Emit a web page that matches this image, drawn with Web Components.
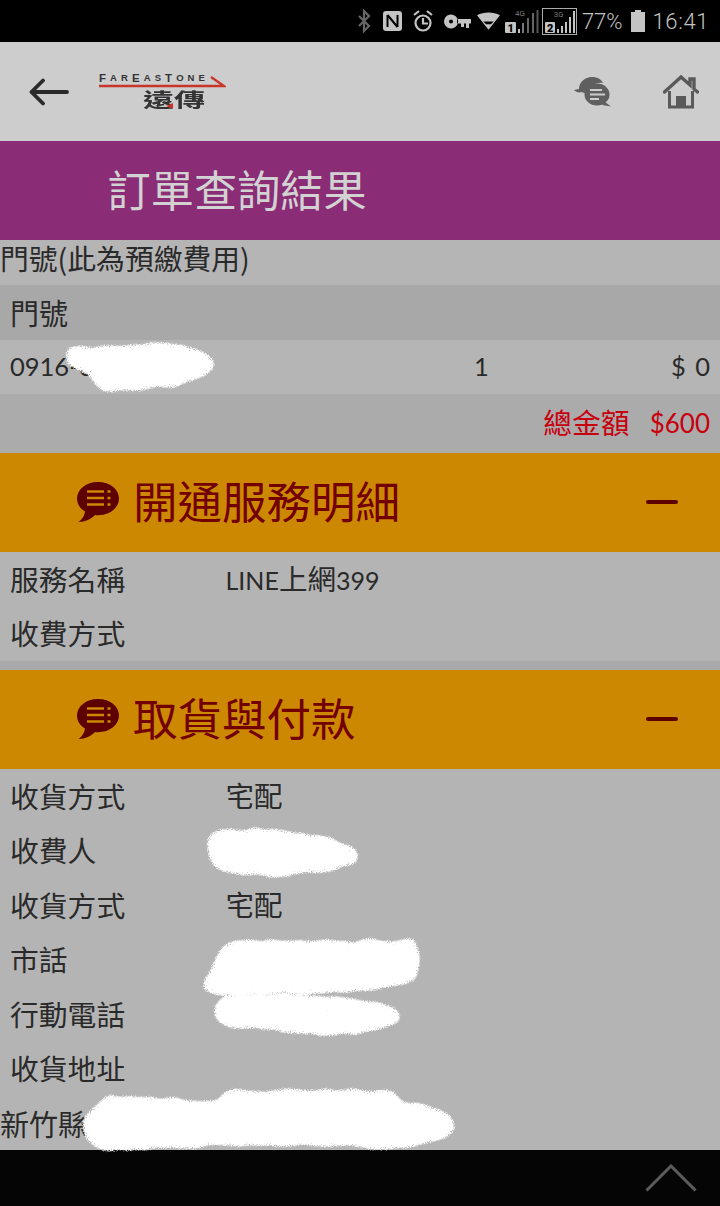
<!DOCTYPE html>
<html lang="zh-Hant"><head><meta charset="utf-8"><title>訂單查詢結果</title>
<style>
html,body{margin:0;padding:0;background:#b4b4b4}
body{width:720px;height:1206px;overflow:hidden;font-family:"Noto Sans CJK TC","Noto Sans",sans-serif}
</style></head><body>
<order-app>
  <status-bar slot="top"></status-bar>
  <app-header slot="top"></app-header>
  <page-title slot="top">訂單查詢結果</page-title>
  <plain-row h="45" pad="0" bg="#b5b5b5" size="28.8" lift="9">門號(此為預繳費用)</plain-row>
  <plain-row h="55" pad="10" bg="#a8a8a8" size="29" lift="0">門號</plain-row>
  <number-row></number-row>
  <total-row></total-row>
  <section-head>開通服務明細</section-head>
  <info-row label="服務名稱">LINE<span style="font-size:28.5px">上網</span>399</info-row>
  <info-row label="收費方式"></info-row>
  <section-gap></section-gap>
  <section-head>取貨與付款</section-head>
  <info-row label="收貨方式"><span style="font-size:28.5px">宅配</span></info-row>
  <info-row label="收費人"></info-row>
  <info-row label="收貨方式"><span style="font-size:28.5px">宅配</span></info-row>
  <info-row label="市話"></info-row>
  <info-row label="行動電話"></info-row>
  <info-row label="收貨地址"></info-row>
  <plain-row h="54" pad="0" bg="#b4b4b4" size="29" lift="0">新竹縣</plain-row>
  <redact-blob slot="over" d="M68 350 C90 346 105 350 117 347 C140 344 165 344 180 347 C196 350 212 354 213 364 C212 374 195 378 180 383 C150 390 120 390 99 388 C94 382 94 378 90 374 C82 370 72 368 68 362Z"></redact-blob>
  <redact-blob slot="over" d="M212 834 C240 827 290 831 320 838 C344 840 358 850 357 858 C352 868 320 870 290 873 C260 878 230 870 216 866 C208 856 206 844 212 834Z"></redact-blob>
  <redact-blob slot="over" d="M222 944 C270 940 340 945 410 940 C418 942 419 960 415 980 C380 990 320 992 280 993 C250 996 216 996 206 990 C204 976 218 966 222 944Z"></redact-blob>
  <redact-blob slot="over" d="M224 997 C260 993 340 995 372 1004 C392 1003 402 1012 399 1022 C380 1030 350 1032 330 1034 C300 1032 250 1029 224 1024 C212 1016 212 1006 224 997Z"></redact-blob>
  <redact-blob slot="over" d="M110 1098 C140 1096 180 1102 220 1102 C220 1092 240 1090 260 1091 C300 1091 360 1091 392 1093 C398 1100 398 1103 422 1105 C442 1108 455 1118 454 1128 C448 1140 420 1146 380 1147 C340 1144 300 1145 260 1143 C200 1146 130 1150 102 1148 C90 1142 82 1130 86 1118 C90 1110 98 1102 110 1098Z"></redact-blob>
  <bottom-nav slot="bottom"></bottom-nav>
</order-app>
<script>
const def=(name,html)=>customElements.define(name,class extends HTMLElement{
  connectedCallback(){if(this.shadowRoot)return;const r=this.attachShadow({mode:'open'});r.innerHTML=typeof html==='function'?html(this):html;}
});
def('order-app',`<style>
:host{display:flex;flex-direction:column;position:relative;width:720px;height:1206px;overflow:hidden;background:#b4b4b4}
.main{flex:1;min-height:0;overflow:hidden;display:flex;flex-direction:column}
</style><slot name="top"></slot><div class="main"><slot></slot></div><slot name="bottom"></slot><slot name="over"></slot>`);

def('status-bar',`<style>
:host{display:flex;align-items:center;justify-content:flex-end;height:42px;background:#000;color:#c4c4c4;flex:none;box-sizing:border-box;padding:0 11px 0 0;font:300 22px Roboto,sans-serif}
svg{display:block;flex:none}
.pct{margin:0 8px 0 5px}.time{margin-left:8px;letter-spacing:.6px}
</style>
<svg width="14" height="24" viewBox="0 0 14 24" style="margin-right:12px"><path d="M2 7l10 10-5 5V2l5 5L2 17" fill="none" stroke="#666" stroke-width="2.2"/></svg>
<svg width="19" height="22" viewBox="0 0 19 22" style="margin-right:11px"><rect x="0" y="1" width="19" height="20" rx="3" fill="#c4c4c4"/><path d="M4.500 5v12M14.500 5v12M4.500 5l10 12" fill="none" stroke="#000" stroke-width="2"/></svg>
<svg width="20" height="24" viewBox="0 0 20 24" style="margin-right:11px"><circle cx="10" cy="14" r="7.500" fill="none" stroke="#c4c4c4" stroke-width="2.200"/><path d="M10 9v5.500h5M1 6l5-4M19 6l-5-4" fill="none" stroke="#c4c4c4" stroke-width="2.200"/></svg>
<svg width="27" height="15" viewBox="0 0 27 15" style="margin-right:6px"><path d="M7 .5a7 7 0 1 1-6.500 9.500A7 7 0 0 1 7 .5zm0 5a2 2 0 1 0 0 4 2 2 0 0 0 0-4zM13 5h14v4.500h-2V14h-3V9.500h-2V13h-3V9.500h-4z" fill="#c4c4c4" fill-rule="evenodd"/></svg>
<svg width="23" height="18" viewBox="0 0 24 18" style="margin-right:5px"><path d="M0 3C7-1 17-1 24 3L12 18z" fill="#c4c4c4"/><path d="M6.500 9.500h11l-3 3h-5z" fill="#000"/></svg>
<svg width="34" height="26" viewBox="0 0 34 26" style="margin-right:3px"><rect x="0" y="14" width="11" height="11" rx="1" fill="#c4c4c4"/><text x="2.500" y="23.500" font-family="Roboto,sans-serif" font-weight="900" font-size="11" fill="#000">1</text><rect x="13" y="21" width="2" height="4" fill="#c4c4c4"/><rect x="17" y="15" width="2" height="10" fill="#777"/><rect x="22" y="10" width="2" height="15" fill="#666"/><rect x="27" y="5" width="2" height="20" fill="#666"/><rect x="31.500" y="2" width="2" height="23" fill="#555"/><text x="10" y="8" font-family="Roboto,sans-serif" font-size="8" fill="#aaa">4G</text></svg>
<svg width="35" height="27" viewBox="0 0 35 27"><rect x=".5" y=".5" width="34" height="26" fill="none" stroke="#aaa"/><rect x="3" y="14" width="10" height="11" rx="1" fill="#c4c4c4"/><text x="5" y="23.500" font-family="Roboto,sans-serif" font-weight="900" font-size="11" fill="#000">2</text><rect x="15" y="21" width="2" height="4" fill="#c4c4c4"/><rect x="19" y="18" width="2" height="7" fill="#c4c4c4"/><rect x="23" y="14" width="2" height="11" fill="#c4c4c4"/><rect x="27" y="9" width="2" height="16" fill="#c4c4c4"/><rect x="31" y="3" width="2" height="22" fill="#c4c4c4"/><text x="12" y="9" font-family="Roboto,sans-serif" font-size="7.500" fill="#aaa">3G</text></svg>
<span class="pct">77%</span>
<svg width="14" height="24" viewBox="0 0 14 24"><path d="M4 1h6v2h4v20H0V3h4z" fill="#c4c4c4"/></svg>
<span class="time">16:41</span>`);

def('app-header',`<style>
:host{display:flex;align-items:center;height:99px;background:#cdcdcd;flex:none}
svg{display:block;flex:none}
.logo{margin-left:28px;width:127px;height:40px;display:flex;flex-direction:column;position:relative}
.en{font:700 11px/12px "Liberation Sans",sans-serif;color:#333;white-space:nowrap;display:flex;justify-content:space-between;width:106px;height:12px;align-items:flex-end}
.en i{font-style:normal;font-size:9.500px}.en b{font-size:11.500px}
.zh{font:700 31px/22px "Noto Sans CJK TC",sans-serif;color:#333;margin:0 0 0 44px;width:62px;white-space:nowrap;transform:scaleY(.64);transform-origin:50% 50%;height:22px}
.tri{position:absolute;left:67px;top:31px}
.sp{flex:1}
</style>
<svg width="42" height="32" viewBox="0 0 42 32" style="margin-left:29px"><path d="M2.500 16H38M14 4.500L2.500 16 14 27.500" fill="none" stroke="#2a2a2a" stroke-width="3.800" stroke-linecap="round" stroke-linejoin="round"/></svg>
<div class="logo"><span class="en"><b>F</b><i>A</i><i>R</i><b>E</b><i>A</i><i>S</i><b>T</b><i>O</i><i>N</i><i>E</i></span>
<svg width="127" height="12" viewBox="0 0 127 12" style="margin-top:-8px"><path d="M0 10h125L112 1" fill="none" stroke="#c8352b" stroke-width="2.400"/></svg>
<span class="zh">遠傳</span><svg class="tri" width="7" height="6" viewBox="0 0 7 6"><path d="M7 0v6L0 3z" fill="#c8352b"/></svg></div>
<span class="sp"></span>
<svg width="38" height="32" viewBox="0 0 38 32" style="margin-right:52px"><path d="M1 14l5-1c0-7 6-12 13-12 5 0 9 2 11 6-8-1-15 4-15 11l-7-2c-2 1-5 0-7-2z" fill="#5f5f5f"/><ellipse cx="24" cy="18.500" rx="12.500" ry="11" fill="#5f5f5f"/><path d="M32 26l6 4.500-9-1.500z" fill="#5f5f5f"/><path d="M17 14h12M17 18.500h15M17 23h9" stroke="#cdcdcd" stroke-width="1.800"/></svg>
<svg width="36" height="34" viewBox="0 0 36 34" style="margin-right:21px"><path d="M1.500 17L18 2l9 8V4h4v10l3.500 3" fill="none" stroke="#5a5a5a" stroke-width="3.400" stroke-linecap="round"/><path d="M5 17.500V33h26V17.500L18 5.500z" fill="#cdcdcd"/><path d="M6.500 16V32h23V16" fill="none" stroke="#5a5a5a" stroke-width="3"/><rect x="13" y="21" width="10" height="11" fill="#5a5a5a"/></svg>`);

def('page-title',`<style>
:host{display:flex;align-items:center;height:99px;background:#8a2c76;color:#d2d2d2;flex:none;box-sizing:border-box;padding:0 0 3px 107.500px;font:400 43.200px/1 "Noto Sans CJK TC",sans-serif}
</style><slot></slot>`);

def('plain-row',el=>`<style>
:host{display:flex;align-items:center;flex:none;white-space:nowrap;color:#2a2a2a;box-sizing:border-box;height:${el.getAttribute('h')}px;padding-left:${el.getAttribute('pad')}px;padding-bottom:${el.getAttribute('lift')}px;background:${el.getAttribute('bg')};font:400 ${el.getAttribute('size')}px/1 "Noto Sans CJK TC",sans-serif}
</style><slot></slot>`);

def('number-row',`<style>
:host{display:grid;grid-template-columns:464px 1fr auto;align-items:center;height:54px;background:#b5b5b5;color:#2a2a2a;flex:none;box-sizing:border-box;padding:0 10px;font:400 25.500px/1 Lato,sans-serif}
.r{word-spacing:3px}
</style><span>0916-0</span><span>1</span><span class="r">$ 0</span>`);

def('total-row',`<style>
:host{display:flex;align-items:center;justify-content:flex-end;gap:20px;height:59px;background:#ababab;color:#c8000e;flex:none;box-sizing:border-box;padding:0 10px 2px 0;font:400 28.800px/1 "Noto Sans CJK TC",sans-serif}
.m{font:400 26px/1 Lato,sans-serif}
</style><span>總金額</span><span class="m">$600</span>`);

def('section-head',`<style>
:host{display:flex;align-items:center;height:99px;background:#cc8800;color:#730000;flex:none;box-sizing:border-box;font:400 44.500px/1 "Noto Sans CJK TC",sans-serif}
svg{display:block;flex:none}
.t{flex:1;margin:0 0 5px 13px;white-space:nowrap}
.m{width:32px;height:4px;border-radius:2px;background:#5c0000;margin:0 42px 0 0;position:relative;top:-1px}
</style>
<svg width="44" height="44" viewBox="0 0 44 44" style="margin:0 0 1px 76px"><path d="M22 2C10 2 1 9.500 1 18.500c0 5.500 3 10 8 13-.500 4-2.500 8-6.500 10.500 7 0 12.500-3 16.500-7 1 .1 2 .2 3 .2 12 0 21-7.500 21-16.700S34 2 22 2z" fill="#5e0000"/><path d="M11 11.500h17M11 18h17M11 24.500h17M31.500 11.500h3M31.500 18h3M31.500 24.500h3" stroke="#cc8800" stroke-width="2.600"/></svg>
<span class="t"><slot></slot></span><span class="m"></span>`);

def('section-gap',`<style>:host{display:block;height:9px;background:#a9a9a9;flex:none}</style>`);

def('info-row',el=>`<style>
:host{display:flex;align-items:center;height:54.500px;flex:none;box-sizing:border-box;padding-left:10px;color:#2a2a2a;font:400 28.800px/1 "Noto Sans CJK TC",sans-serif;white-space:nowrap}
.l{width:215.500px;flex:none}.v{font:400 25px/1 Lato,"Noto Sans CJK TC",sans-serif}
</style><span class="l">${el.getAttribute('label')}</span><span class="v"><slot></slot></span>`);

def('redact-blob',el=>`<style>:host{position:absolute;left:0;top:0;width:720px;height:1206px;pointer-events:none;display:block}svg{display:block}</style>
<svg width="720" height="1206" viewBox="0 0 720 1206"><defs><filter id="f" filterUnits="userSpaceOnUse" x="0" y="300" width="720" height="900" color-interpolation-filters="sRGB">
<feTurbulence type="fractalNoise" baseFrequency=".06" numOctaves="2" seed="4" result="w"/>
<feDisplacementMap in="SourceGraphic" in2="w" scale="8" xChannelSelector="R" yChannelSelector="G" result="d"/>
<feGaussianBlur in="d" stdDeviation="3.500" result="b"/>
<feTurbulence type="fractalNoise" baseFrequency=".95" numOctaves="1" seed="9" result="n"/>
<feColorMatrix in="n" type="matrix" values="0 0 0 0 1  0 0 0 0 1  0 0 0 0 1  1 0 0 0 0" result="na"/>
<feComposite in="b" in2="na" operator="arithmetic" k1="2" k2=".1" k3="0" k4="0" result="m"/>
<feComponentTransfer in="m" result="t"><feFuncA type="linear" slope="4" intercept="-1"/></feComponentTransfer>
<feFlood flood-color="#fff"/><feComposite in2="t" operator="in"/>
</filter></defs><path d="${el.getAttribute('d')}" fill="#fff" filter="url(#f)"/></svg>`);

def('bottom-nav',`<style>
:host{display:flex;justify-content:flex-end;align-items:flex-start;height:56px;background:#050505;flex:none}
svg{display:block;margin:14px 23px 0 0}
</style><svg width="52" height="28" viewBox="0 0 52 28"><path d="M1.500 26.500L26 2l24.500 24.500" fill="none" stroke="#5c5c5c" stroke-width="3"/></svg>`);
</script>
</body></html>
